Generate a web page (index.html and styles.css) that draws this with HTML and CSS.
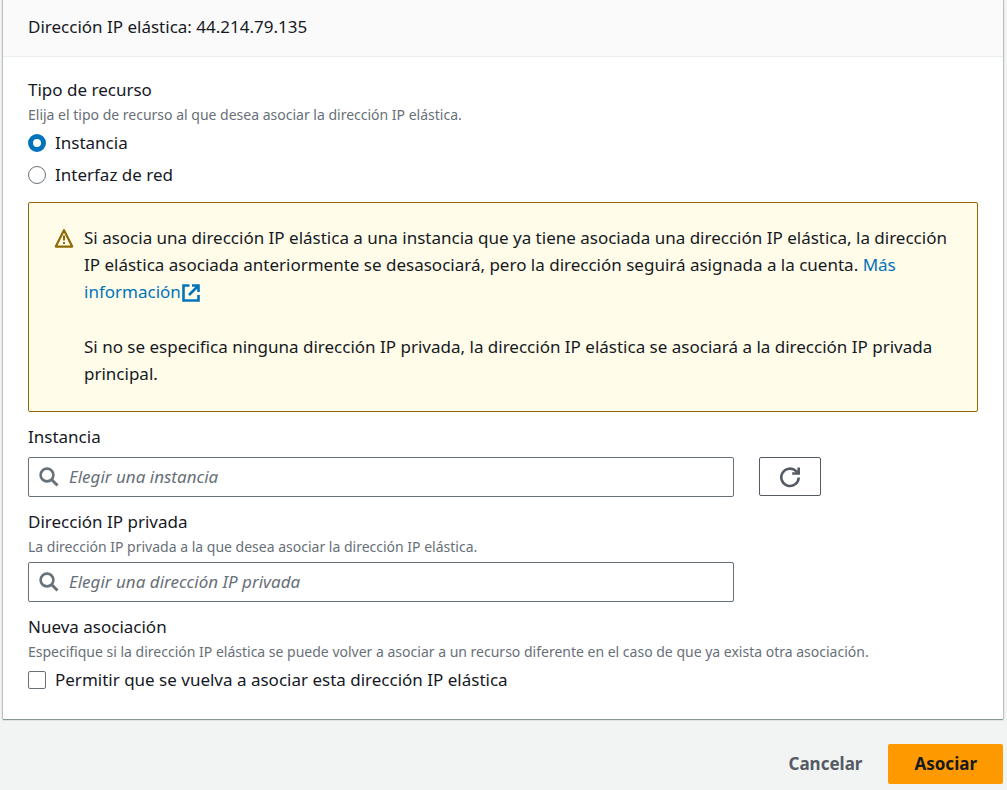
FILE: index.html
```html
<!DOCTYPE html>
<html lang="es">
<head>
<meta charset="utf-8">
<meta name="viewport" content="width=device-width, initial-scale=1">
<title>Asociar dirección IP elástica</title>
<link rel="stylesheet" href="styles.css">
</head>
<body>
<form class="page">
  <section class="card">
    <header class="card-header"><h2 class="card-title">Dirección IP elástica: 44.214.79.135</h2></header>
    <div class="card-body">
      <fieldset class="group">
        <legend class="label">Tipo de recurso</legend>
        <p class="hint">Elija el tipo de recurso al que desea asociar la dirección IP elástica.</p>
        <div class="options">
          <label class="option"><input class="radio" type="radio" name="tipo" checked>Instancia</label>
          <label class="option"><input class="radio" type="radio" name="tipo">Interfaz de red</label>
        </div>
      </fieldset>

      <div class="alert">
        <svg class="alert-icon" viewBox="0 0 20 20" aria-hidden="true"><path d="M10 2.2 18.2 18.6H1.8Z" fill="none" stroke="currentColor" stroke-width="2.2" stroke-linejoin="round"/><path d="M10 7.5v5M10 14v2" stroke="currentColor" stroke-width="2"/></svg>
        <div class="alert-text">
          <p class="paragraph">Si asocia una dirección IP elástica a una instancia que ya tiene asociada una dirección IP elástica, la dirección IP elástica asociada anteriormente se desasociará, pero la dirección seguirá asignada a la cuenta. <a class="link" href="#info">Más información<svg class="link-icon" viewBox="0 0 18 18" aria-hidden="true"><path d="M7.5 1.5H1.5V16.5H16.5V11M10 1.5h6.5V8M16 2 7 11" fill="none" stroke="currentColor" stroke-width="2.6"/></svg></a></p>
          <p class="paragraph">Si no se especifica ninguna dirección IP privada, la dirección IP elástica se asociará a la dirección IP privada principal.</p>
        </div>
      </div>

      <div class="group">
        <label class="label" for="instancia">Instancia</label>
        <div class="row">
          <div class="search">
            <svg class="search-icon" viewBox="0 0 20 20" aria-hidden="true"><circle cx="8" cy="8" r="6.4" fill="none" stroke="currentColor" stroke-width="2.6"/><path d="m12.5 12.5 6 6" stroke="currentColor" stroke-width="3"/></svg>
            <input class="search-input" id="instancia" type="text" placeholder="Elegir una instancia">
          </div>
          <button class="refresh" type="button" aria-label="Actualizar"><svg class="refresh-icon" viewBox="0 0 22 22" aria-hidden="true"><path d="M19.7 11.5A8.7 8.7 0 1 1 17.2 5.2L19 7" fill="none" stroke="currentColor" stroke-width="2.6"/><path d="M19.7 1.5v6h-6.5" fill="none" stroke="currentColor" stroke-width="2.6"/></svg></button>
        </div>
      </div>

      <div class="group">
        <label class="label" for="privada">Dirección IP privada</label>
        <p class="hint">La dirección IP privada a la que desea asociar la dirección IP elástica.</p>
        <div class="row row-tight">
          <div class="search">
            <svg class="search-icon" viewBox="0 0 20 20" aria-hidden="true"><circle cx="8" cy="8" r="6.4" fill="none" stroke="currentColor" stroke-width="2.6"/><path d="m12.5 12.5 6 6" stroke="currentColor" stroke-width="3"/></svg>
            <input class="search-input" id="privada" type="text" placeholder="Elegir una dirección IP privada">
          </div>
        </div>
      </div>

      <fieldset class="group">
        <legend class="label">Nueva asociación</legend>
        <p class="hint">Especifique si la dirección IP elástica se puede volver a asociar a un recurso diferente en el caso de que ya exista otra asociación.</p>
        <div class="options">
          <label class="option"><input class="checkbox" type="checkbox">Permitir que se vuelva a asociar esta dirección IP elástica</label>
        </div>
      </fieldset>
    </div>
  </section>
  <footer class="actions">
    <button class="button" type="button">Cancelar</button>
    <button class="button button-primary" type="submit">Asociar</button>
  </footer>
</form>
</body>
</html>
```
FILE: styles.css
```css
* { box-sizing: border-box; }
body {
  margin: 0;
  background: #f2f3f3;
  color: #16191f;
  font-family: "Noto Sans", "Open Sans", sans-serif;
  font-size: 17px;
  line-height: 28px;
}
p, h2 { margin: 0; }
button, input { font: inherit; color: inherit; }
.page { padding: 0 4px 6px 3px; }
.card {
  background: #fff;
  box-shadow: 0 1px 1px #879596, 1px 0 1px #c4cacb, -1px 0 1px #c4cacb;
}
.card-header {
  padding: 13px 25px 15px;
  background: #fafafa;
  border-bottom: 1px solid #eaeded;
}
.card-title { font-size: 17px; font-weight: 400; }
.card-body {
  display: flex;
  flex-direction: column;
  gap: 11px;
  padding: 19px 25px 25px;
}
.group { margin: 0; padding: 0; border: 0; min-width: 0; }
.label { display: block; padding: 0; }
.hint { font-size: 14px; line-height: 22px; color: #687078; }
.options { display: flex; flex-direction: column; gap: 4px; padding-top: 3px; }
.option { display: flex; align-items: center; gap: 9px; }
.radio, .checkbox {
  appearance: none;
  width: 18px;
  height: 18px;
  margin: 0;
  border: 1px solid #687078;
  background: #fff;
}
.radio { border-radius: 50%; }
.radio:checked { border: 5px solid #0073bb; }
.checkbox { border-radius: 2px; }
.alert {
  display: flex;
  gap: 10px;
  margin-top: 2px;
  padding: 21px 25px 24px;
  border: 1px solid #906806;
  border-radius: 2px;
  background: #fffce9;
  line-height: 27px;
}
.alert-icon { flex: none; width: 20px; height: 20px; margin-top: 4px; color: #906806; }
.alert-text { display: flex; flex-direction: column; gap: 28px; }
.link { color: #0073bb; text-decoration: none; }
.link-icon { width: 18px; height: 18px; margin-left: 1px; vertical-align: -4px; }
.row { display: grid; grid-template-columns: calc(75% - 7px) 1fr; gap: 25px; padding-top: 6px; }
.row-tight { padding-top: 4px; }
.search {
  display: flex;
  align-items: center;
  gap: 10px;
  height: 40px;
  padding: 0 10px;
  border: 1px solid #687078;
  border-radius: 2px;
  background: #fff;
}
.search-icon { flex: none; width: 20px; height: 20px; color: #687078; }
.search-input { flex: 1; min-width: 0; padding: 0; border: 0; outline: 0; background: none; }
.search-input::placeholder { color: #687078; font-style: italic; opacity: 1; }
.refresh {
  display: flex;
  align-items: center;
  justify-content: center;
  width: 62px;
  height: 39px;
  padding: 0;
  border: 1px solid #545b64;
  border-radius: 2px;
  background: #fff;
  color: #545b64;
}
.refresh-icon { width: 22px; height: 22px; }
.actions { display: flex; justify-content: flex-end; padding-top: 25px; }
.button {
  height: 40px;
  padding: 0 26px;
  border: 0;
  border-radius: 2px;
  background: none;
  color: #545b64;
  font-weight: 700;
}
.button-primary { background: #ff9900; color: #16191f; }
```
